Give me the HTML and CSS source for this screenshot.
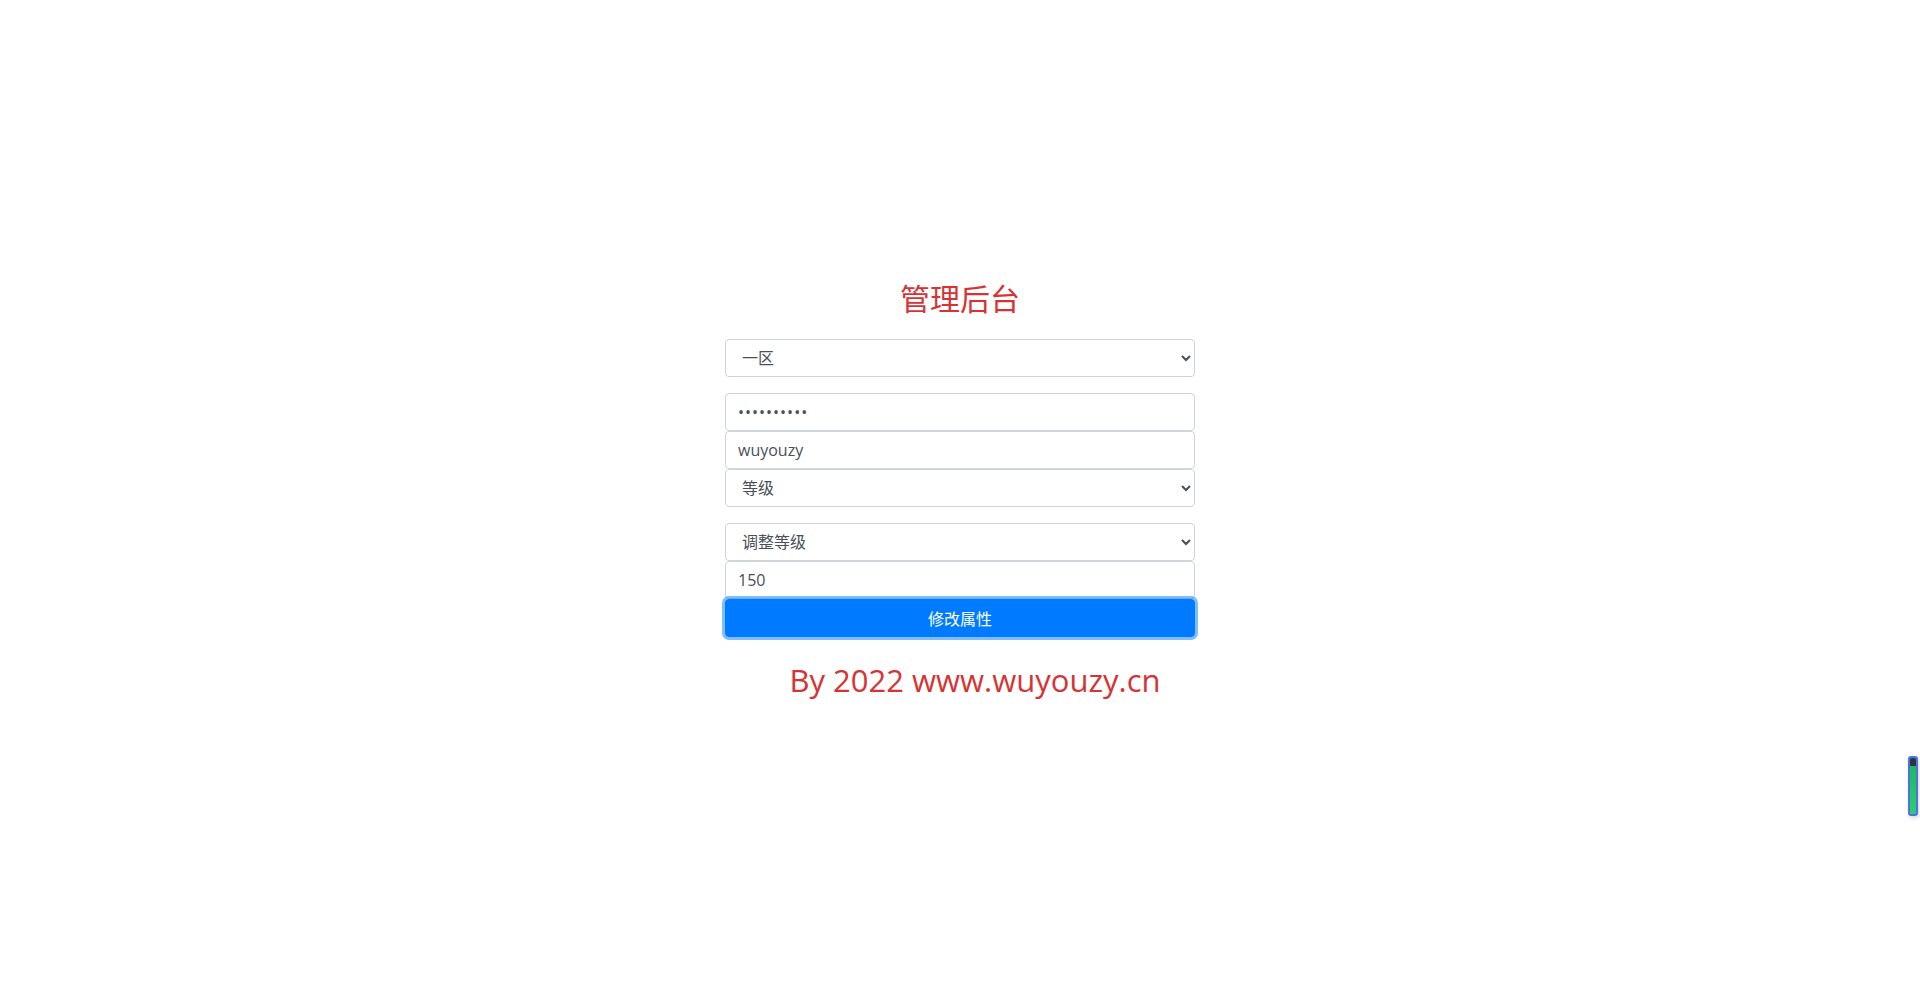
FILE: index.html
```html
<!DOCTYPE html>
<html lang="zh-CN">
<head>
<meta charset="utf-8">
<title>管理后台</title>
<link rel="stylesheet" href="styles.css">
</head>
<body>
<main class="page">
  <h2 class="title">管理后台</h2>
  <form class="panel">
    <div class="group">
      <select class="control">
        <option>一区</option>
      </select>
    </div>
    <div class="group">
      <input class="control password" type="password" value="wuyouzy123">
      <input class="control" type="text" value="wuyouzy">
      <select class="control">
        <option>等级</option>
      </select>
    </div>
    <div class="group">
      <select class="control">
        <option>调整等级</option>
      </select>
      <input class="control" type="text" value="150">
      <button class="btn" type="button">修改属性</button>
    </div>
  </form>
  <h2 class="footer">By 2022 www.wuyouzy.cn</h2>
</main>
<div class="widget"><span class="cap"></span></div>
</body>
</html>
```

FILE: styles.css
```css
html, body {
  margin: 0;
  padding: 0;
  background: #fff;
}
body {
  font-family: "Open Sans", "Noto Sans CJK SC", sans-serif;
  font-size: 16px;
  color: #212529;
}
.page {
  display: flex;
  flex-direction: column;
  align-items: center;
  padding-top: 278px;
}
.title {
  margin: 0 0 23px;
  font-size: 30px;
  font-weight: 400;
  line-height: 38px;
  color: #d63434;
  font-family: "Noto Sans CJK SC", sans-serif;
}
.panel {
  width: 470px;
  display: flex;
  flex-direction: column;
  gap: 16px;
}
.group {
  display: flex;
  flex-direction: column;
}
.control {
  box-sizing: border-box;
  display: block;
  width: 100%;
  height: 38px;
  padding: 6px 12px;
  font-family: "Open Sans", "Noto Sans CJK SC", sans-serif;
  font-size: 16px;
  line-height: 24px;
  color: #495057;
  background: #fff;
  border: 1px solid #ced4da;
  border-radius: 4px;
  margin: 0;
  outline: none;
}
select.control {
  padding-left: 12px;
}
.password {
  letter-spacing: 1px;
}
.btn {
  box-sizing: border-box;
  display: block;
  width: 100%;
  height: 38px;
  margin: 0;
  padding: 6px 12px;
  font-family: "Noto Sans CJK SC", sans-serif;
  font-size: 16px;
  line-height: 24px;
  color: #fff;
  background: #007bff;
  border: 1px solid #007bff;
  border-radius: 4px;
  box-shadow: 0 0 0 3px rgba(0, 123, 255, 0.5);
  cursor: pointer;
}
.footer {
  margin: 24px 0 0;
  padding-left: 30px;
  font-size: 31px;
  font-weight: 400;
  line-height: 38px;
  color: #d63434;
  letter-spacing: 0;
}
.widget {
  position: fixed;
  left: 1908px;
  top: 756px;
  width: 6px;
  height: 56px;
  border: 2px solid #4f6ff0;
  border-radius: 3px;
  background: linear-gradient(#19b85a, #2ccf6a);
  overflow: hidden;
  box-shadow: 1px 2px 4px rgba(0, 0, 0, 0.15);
}
.cap {
  display: block;
  height: 8px;
  background: #2e3440;
  border-radius: 2px 2px 0 0;
}
```
